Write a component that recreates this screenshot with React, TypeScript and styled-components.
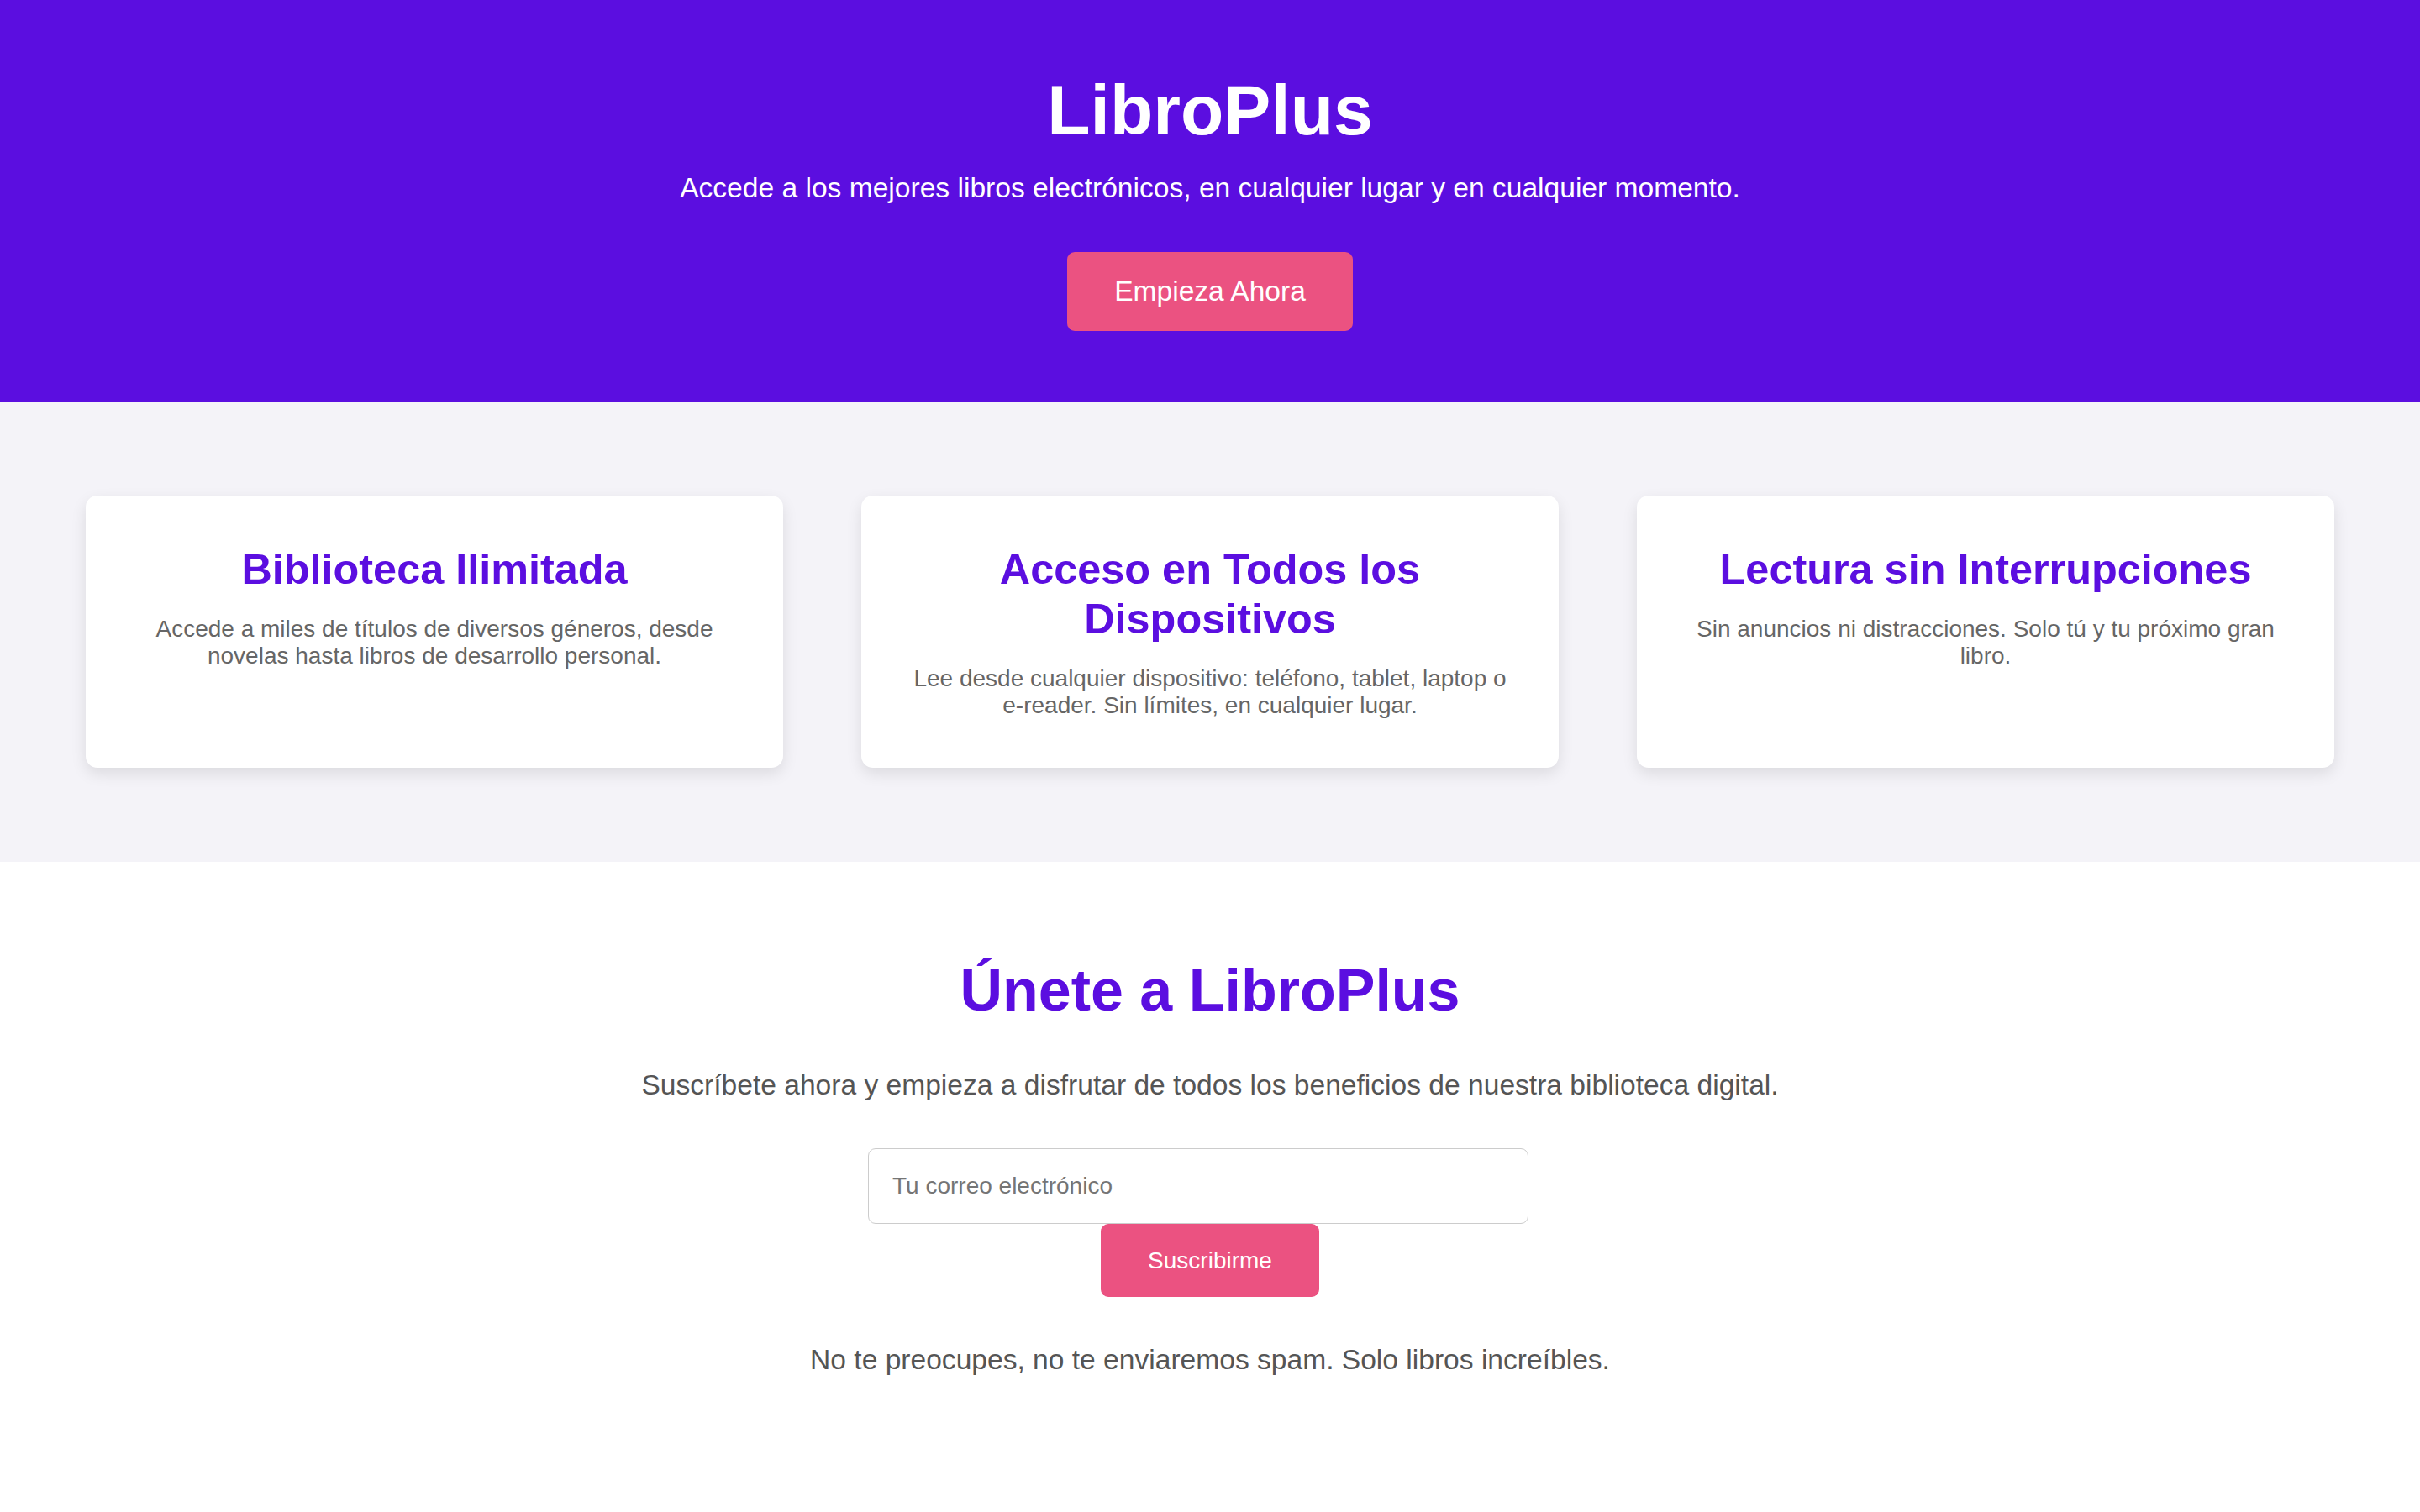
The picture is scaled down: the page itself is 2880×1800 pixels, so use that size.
import React from "react";
import styled, { createGlobalStyle } from "styled-components";

const PURPLE = "#5b0ee0";
const PINK = "#eb5281";

const GlobalStyle = createGlobalStyle`
  html {
    overflow-x: hidden;
    overflow-y: scroll;
  }
  body {
    margin: 0;
    font-family: "Liberation Sans", Arial, sans-serif;
    background: #ffffff;
  }
  ::-webkit-scrollbar {
    width: 20px;
  }
  ::-webkit-scrollbar-track {
    background: #e4e4e4;
    border-left: 1px solid #d4d4d4;
  }
  ::-webkit-scrollbar-thumb {
    background: #383838;
    border-radius: 10px;
    border: 2px solid transparent;
    border-right-width: 0;
    background-clip: padding-box;
  }
`;

const Page = styled.div`
  width: 100vw;
  min-height: 2638px;
  display: flex;
  flex-direction: column;
`;

const Hero = styled.header`
  background: ${PURPLE};
  color: #ffffff;
  text-align: center;
  padding: 83px 56px 84px;
  display: flex;
  flex-direction: column;
  align-items: center;
`;

const Title = styled.h1`
  margin: 0 0 25px;
  font-size: 84px;
  font-weight: 700;
  line-height: normal;
`;

const Tagline = styled.p`
  margin: 0 0 57px;
  font-size: 33.6px;
  line-height: normal;
`;

const PinkButton = styled.button<{ $size: number; $py: number }>`
  background: ${PINK};
  color: #ffffff;
  border: 0;
  border-radius: 9px;
  padding: ${(p) => p.$py}px 56px;
  font-family: inherit;
  font-size: ${(p) => p.$size}px;
  line-height: normal;
  cursor: pointer;
`;

const Features = styled.section`
  background: #f4f3f8;
  padding: 112px 102px;
  display: grid;
  grid-template-columns: repeat(3, 1fr);
  gap: 93px;
`;

const Card = styled.article`
  background: #ffffff;
  border-radius: 14px;
  padding: 58px;
  box-shadow: 0 7px 18px rgba(0, 0, 0, 0.1);
  text-align: center;
`;

const CardTitle = styled.h3`
  margin: 0 0 26px;
  font-size: 50.4px;
  font-weight: 700;
  line-height: normal;
  color: ${PURPLE};
`;

const CardText = styled.p`
  margin: 0;
  font-size: 28px;
  line-height: normal;
  color: #666666;
`;

const Join = styled.section`
  flex: 1;
  background: #ffffff;
  padding: 113px 56px 112px;
  display: flex;
  flex-direction: column;
  align-items: center;
  text-align: center;
`;

const JoinTitle = styled.h2`
  margin: 0 0 54px;
  font-size: 70px;
  font-weight: 700;
  line-height: normal;
  color: ${PURPLE};
`;

const JoinText = styled.p<{ $after: number }>`
  margin: 0 0 ${(p) => p.$after}px;
  font-size: 33.6px;
  line-height: normal;
  color: #555555;
`;

const Form = styled.form`
  display: flex;
  flex-direction: column;
  align-items: center;
  margin: 0 0 56px;
`;

const EmailInput = styled.input`
  box-sizing: border-box;
  width: 786px;
  height: 90px;
  margin: 0 28px 0 0;
  padding: 0 28px;
  border: 1px solid #cccccc;
  border-radius: 9px;
  font-family: inherit;
  font-size: 28px;
  color: #333333;
  background: #ffffff;
  outline: none;

  &::placeholder {
    color: #757575;
  }
`;

const features = [
  {
    title: "Biblioteca Ilimitada",
    text: "Accede a miles de títulos de diversos géneros, desde novelas hasta libros de desarrollo personal.",
  },
  {
    title: "Acceso en Todos los Dispositivos",
    text: "Lee desde cualquier dispositivo: teléfono, tablet, laptop o e-reader. Sin límites, en cualquier lugar.",
  },
  {
    title: "Lectura sin Interrupciones",
    text: "Sin anuncios ni distracciones. Solo tú y tu próximo gran libro.",
  },
];

export default function App() {
  return (
    <>
      <GlobalStyle />
      <Page>
        <Hero>
          <Title>LibroPlus</Title>
          <Tagline>
            Accede a los mejores libros electrónicos, en cualquier lugar y en cualquier momento.
          </Tagline>
          <PinkButton type="button" $size={33.6} $py={28}>
            Empieza Ahora
          </PinkButton>
        </Hero>

        <Features>
          {features.map((f) => (
            <Card key={f.title}>
              <CardTitle>{f.title}</CardTitle>
              <CardText>{f.text}</CardText>
            </Card>
          ))}
        </Features>

        <Join>
          <JoinTitle>Únete a LibroPlus</JoinTitle>
          <JoinText $after={56}>
            Suscríbete ahora y empieza a disfrutar de todos los beneficios de nuestra biblioteca digital.
          </JoinText>
          <Form onSubmit={(e) => e.preventDefault()}>
            <EmailInput type="email" placeholder="Tu correo electrónico" />
            <PinkButton type="submit" $size={28} $py={27.5}>
              Suscribirme
            </PinkButton>
          </Form>
          <JoinText $after={0}>
            No te preocupes, no te enviaremos spam. Solo libros increíbles.
          </JoinText>
        </Join>
      </Page>
    </>
  );
}
